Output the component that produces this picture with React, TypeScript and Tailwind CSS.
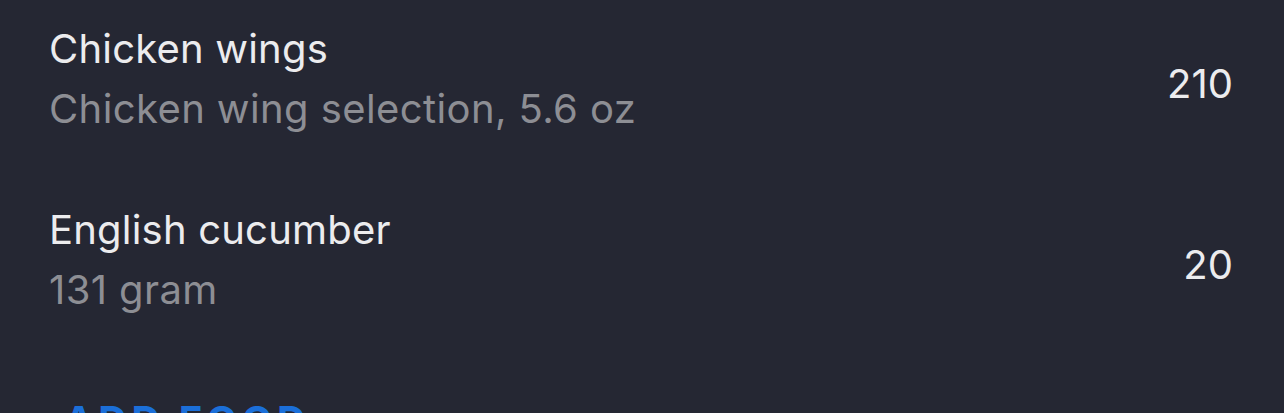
const items = [
  { name: "Chicken wings", detail: "Chicken wing selection, 5.6 oz", kcal: 210 },
  { name: "English cucumber", detail: "131 gram", kcal: 20 },
];

export default function App() {
  return (
    <div
      className="w-[1284px] h-[413px] overflow-hidden bg-[#252733] pt-[19px]"
      style={{ fontFamily: "Inter, 'Noto Sans', sans-serif" }}
    >
      {items.map((item) => (
        <div key={item.name} className="flex items-center justify-between pl-[49px] pr-[51px] pb-[61px]">
          <div className="flex flex-col">
            <span className="text-[40px] leading-[60px] tracking-[0.005em] text-[#ececee]">{item.name}</span>
            <span className="text-[40px] leading-[60px] tracking-[0.01em] text-[#8d8e94]">{item.detail}</span>
          </div>
          <span className="text-[40px] leading-[60px] text-[#ececee] mt-[10px]">{item.kcal}</span>
        </div>
      ))}
      <div className="pl-[64px] pt-[10px]">
        <button className="text-[40px] leading-[60px] font-bold tracking-[0.11em] text-[#1b6fd9]">ADD FOOD</button>
      </div>
    </div>
  );
}
